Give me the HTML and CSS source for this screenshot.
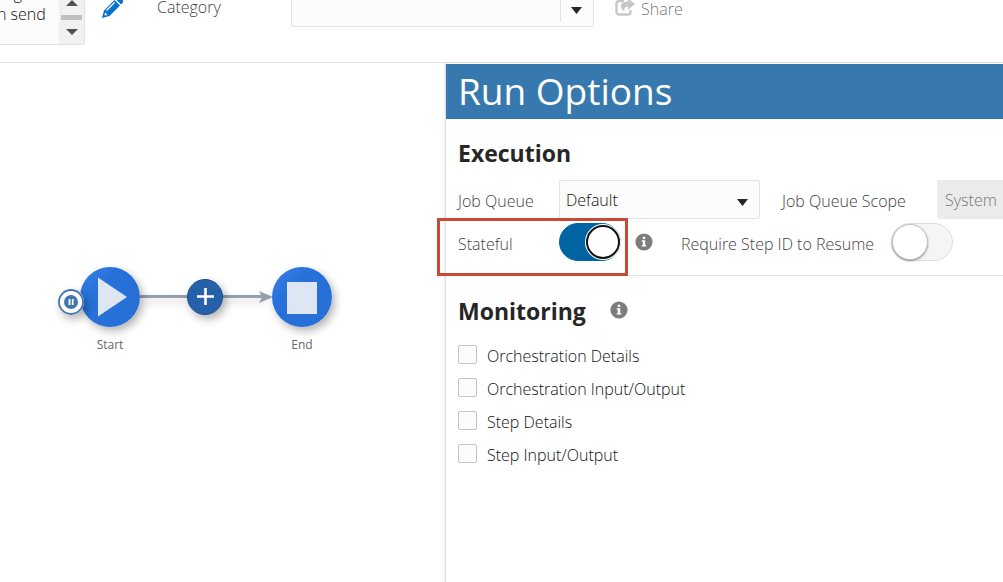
FILE: index.html
```html
<!DOCTYPE html>
<html lang="en">
<head>
    <meta charset="UTF-8">
    <meta name="viewport" content="width=device-width, initial-scale=1.0">
    <title>Run Options</title>
    <link rel="stylesheet" href="styles.css">
</head>
<body>

<header class="topbar">
    <div class="descp">
        <textarea class="descp-text" aria-label="Description">    g
n send</textarea>
        <div class="scroll">
            <svg width="12" height="6" viewBox="0 0 12 6"><path d="M0 6L6 0L12 6Z" fill="#505050"/></svg>
            <div class="scroll-thumb"></div>
            <svg width="12" height="6" viewBox="0 0 12 6"><path d="M0 0L6 6L12 0Z" fill="#505050"/></svg>
        </div>
    </div>
    <button class="edit-btn" aria-label="Edit">
        <svg width="22" height="22" viewBox="0 0 22 22">
            <path fill="#0572ce" d="M15 1.5Q17 0 19 2L20.5 3.5Q22 5.5 20.5 7L19 8.5L13.5 3Z"/>
            <path fill="#0572ce" d="M12.5 4L18 9.5L7.5 20L0 22L2 14.5Z"/>
            <path stroke="#fff" stroke-width="1.3" fill="none" d="M4.5 14.5L12.5 6.5"/>
            <path fill="#fff" d="M3.2 16.5L5.6 18.9L3 19.6L2.4 19Z"/>
        </svg>
    </button>
    <label class="label category-label" for="category">Category</label>
    <div class="select category">
        <select id="category"><option></option></select>
        <span class="divider"></span>
        <svg class="arrow" width="11" height="7" viewBox="0 0 11 7"><path d="M0 0H11L5.5 7Z" fill="#262626"/></svg>
    </div>
    <button class="share-btn" disabled>
        <svg width="20" height="18" viewBox="0 0 20 18">
            <path d="M9 3H4Q1.5 3 1.5 5.5V14Q1.5 16.5 4 16.5H13Q15.5 16.5 15.5 14V12" fill="none" stroke="#c8c8c8" stroke-width="2.4"/>
            <path d="M13 0L20 6L13 12V8.7Q8.500 8.5 9.5 13.500Q5 10.500 6 7Q7.500 3.300 13 3.400Z" fill="#c8c8c8"/>
        </svg>
        <span>Share</span>
    </button>
</header>

<main class="main">
    <section class="canvas">
        <div class="link"></div>
        <svg class="link-arrow" width="14" height="12" viewBox="0 0 14 12"><path d="M0 0L14 6L0 12L3 6Z" fill="#94a0ac"/></svg>

        <button class="node start" aria-label="Start">
            <svg width="60" height="60" viewBox="0 0 60 60"><path d="M18 10.5L47 30L18 49.5Z" fill="#dfe6f3"/></svg>
        </button>
        <button class="node pause" aria-label="Pause">
            <svg width="26" height="26" viewBox="0 0 26 26">
                <circle cx="13" cy="13" r="12" fill="#fff" stroke="#4277ad" stroke-width="1.8"/>
                <circle cx="13" cy="13" r="7" fill="#4277ad"/>
                <path d="M11.5 10V16M14.7 10V16" stroke="#fff" stroke-width="1.8"/>
            </svg>
        </button>
        <button class="node add" aria-label="Add step">
            <svg width="36" height="36" viewBox="0 0 36 36"><path d="M18.5 9V26M10 17.5H27" stroke="#fff" stroke-width="2.6"/></svg>
        </button>
        <button class="node end" aria-label="End">
            <svg width="60" height="60" viewBox="0 0 60 60"><path d="M15 15H45V47H15Z" fill="#dfe6f3"/></svg>
        </button>
        <span class="node-name start-name">Start</span>
        <span class="node-name end-name">End</span>
    </section>

    <section class="panel">
        <h1>Run Options</h1>

        <div class="group execution">
            <h2>Execution</h2>
            <div class="row">
                <label class="label first" for="queue">Job Queue</label>
                <div class="select queue">
                    <select id="queue"><option>Default</option></select>
                    <svg class="arrow" width="11" height="7" viewBox="0 0 11 7"><path d="M0 0H11L5.5 7Z" fill="#262626"/></svg>
                </div>
                <label class="label scope-label" for="scope">Job Queue Scope</label>
                <input type="text" class="scope" id="scope" value="System" disabled>
            </div>
            <div class="row stateful">
                <label class="label first" for="stateful">Stateful</label>
                <input type="checkbox" class="switch" id="stateful" checked>
                <svg class="info" width="18" height="18" viewBox="0 0 18 18">
                    <circle cx="9" cy="9" r="8.6" fill="#7d7d7d"/>
                    <path d="M7.8 3.8H10.2V6H7.8ZM6.8 7.3H10.2V12H11.2V13.5H6.8V12H7.8V8.8H6.8Z" fill="#fff"/>
                </svg>
                <label class="label resume-label" for="resume">Require Step ID to Resume</label>
                <input type="checkbox" class="switch" id="resume">
                <div class="highlight"></div>
            </div>
        </div>

        <div class="group monitoring">
            <div class="title-row">
                <h2>Monitoring</h2>
                <svg class="info" width="18" height="18" viewBox="0 0 18 18">
                    <circle cx="9" cy="9" r="8.6" fill="#7d7d7d"/>
                    <path d="M7.8 3.8H10.2V6H7.8ZM6.8 7.3H10.2V12H11.2V13.5H6.8V12H7.8V8.8H6.8Z" fill="#fff"/>
                </svg>
            </div>
            <label class="check"><input type="checkbox"><span>Orchestration Details</span></label>
            <label class="check"><input type="checkbox"><span>Orchestration Input/Output</span></label>
            <label class="check"><input type="checkbox"><span>Step Details</span></label>
            <label class="check"><input type="checkbox"><span>Step Input/Output</span></label>
        </div>
    </section>
</main>

</body>
</html>
```
FILE: styles.css
```css
*, *::before{
    margin: 0;
    padding: 0;
    box-sizing: border-box;
}

body{
    display: flex;
    flex-direction: column;
    min-height: 100vh;
    overflow: hidden;
    background-color: white;
    color: #111;
    font-family: "Open Sans", "Noto Sans", sans-serif;
    font-size: 16px;
    font-weight: 300;
}

input, select, textarea, button{
    font: inherit;
    color: inherit;
}

button{
    border: none;
    background: none;
    cursor: pointer;
}

svg{
    display: block;
    flex: none;
}

.label{
    color: #444;
    white-space: nowrap;
}

/* top bar, scrolled partly out of view */
.topbar{
    display: flex;
    align-items: center;
    margin-top: -31px;
    padding-bottom: 17px;
    border-bottom: 1px solid #e4e4e4;
}

.descp{
    display: flex;
    width: 85px;
    height: 76px;
    border: 1px solid #dfe4e7;
    border-left: none;
    border-radius: 0 2px 2px 0;
    background-color: #fcfcfc;
}

.descp-text{
    width: 59px;
    margin-left: -3px;
    padding-top: 13px;
    border: none;
    outline: none;
    background: none;
    resize: none;
    overflow: hidden;
    white-space: pre;
    line-height: 21px;
}

.scroll{
    display: flex;
    flex: 1;
    flex-direction: column;
    align-items: center;
    justify-content: flex-end;
    gap: 9px;
    margin-left: 3px;
    padding-bottom: 9px;
    background-color: #f1f1f1;
}

.scroll-thumb{
    width: 21px;
    height: 5px;
    background-color: #c1c1c1;
}

.edit-btn{
    margin-left: 17px;
}

.category-label{
    margin-left: 33px;
    width: 134px;
}

.select{
    position: relative;
    height: 39px;
}

.select select{
    appearance: none;
    width: 100%;
    height: 100%;
    padding: 0 6px;
    border: 1px solid #dfe4e7;
    border-radius: 2px;
    background-color: #fcfcfc;
    outline: none;
}

.select .arrow{
    position: absolute;
    right: 12px;
    top: 19px;
}

.category{
    width: 303px;
}

.divider{
    position: absolute;
    right: 33px;
    top: 5px;
    bottom: 5px;
    border-left: 1px solid #dfe4e7;
}

.share-btn{
    display: flex;
    align-items: center;
    gap: 6px;
    margin-left: 21px;
    color: #777;
}

.share-btn span{
    padding-top: 4px;
}

.main{
    display: grid;
    grid-template-columns: 445px minmax(0, 1fr);
    flex: 1;
}

/* orchestration diagram */
.canvas{
    position: relative;
}

.node{
    position: absolute;
    border-radius: 50%;
    box-shadow: 3px 4px 8px rgba(0, 0, 0, 0.3);
}

.start, .end{
    top: 204px;
    width: 60px;
    height: 60px;
    background: linear-gradient(135deg, #3a82e8, #2670d8 35%);
}

.start{
    left: 80px;
}

.end{
    left: 272px;
}

.pause{
    left: 58px;
    top: 226px;
    width: 26px;
    height: 26px;
    background-color: white;
}

.add{
    left: 187px;
    top: 216px;
    width: 36px;
    height: 36px;
    border: 1px solid #1b508f;
    background-color: #2660a8;
}

.add svg{
    margin: -1px;
}

.link{
    position: absolute;
    left: 140px;
    top: 232px;
    width: 124px;
    height: 3px;
    background-color: #94a0ac;
    box-shadow: 3px 4px 8px rgba(0, 0, 0, 0.2);
}

.link-arrow{
    position: absolute;
    left: 259px;
    top: 228px;
}

.node-name{
    position: absolute;
    top: 273px;
    width: 60px;
    text-align: center;
    font-size: 12px;
    font-weight: 400;
    color: #666;
}

.start-name{
    left: 80px;
}

.end-name{
    left: 272px;
}

/* run options */
.panel{
    padding-top: 1px;
    border-left: 1px solid #e0e0e0;
    box-shadow: -1px 0 2px rgba(0, 0, 0, 0.08);
}

h1{
    padding-left: 12px;
    padding-bottom: 2px;
    background-color: #3779ae;
    color: white;
    font-size: 37px;
    font-weight: 400;
    line-height: 53px;
}

h2{
    color: #262626;
    font-size: 23px;
    font-weight: 700;
    line-height: 32px;
}

.group{
    padding-left: 12px;
}

.execution{
    padding-top: 18px;
    padding-bottom: 14px;
    border-bottom: 1px solid #e4e4e4;
}

.row{
    display: flex;
    align-items: center;
    height: 39px;
    margin-top: 11px;
}

.row .label{
    padding-top: 2px;
}

.first{
    flex: none;
    width: 101px;
}

.queue{
    flex: none;
    width: 201px;
}

.scope-label{
    flex: none;
    width: 155px;
    margin-left: 22px;
}

.scope{
    flex: 1;
    min-width: 66px;
    height: 39px;
    padding-left: 8px;
    border: none;
    border-radius: 2px 0 0 2px;
    background-color: #ebebeb;
    color: #777;
}

.stateful{
    position: relative;
    height: 38px;
    margin-top: 4px;
}

.stateful .label{
    padding-top: 4px;
}

.switch{
    appearance: none;
    display: flex;
    align-items: center;
    flex: none;
    width: 62px;
    height: 38px;
    border: 1px solid #dfdfdf;
    border-radius: 19px;
    background-color: #f5f5f5;
}

.switch::before{
    content: "";
    width: 36px;
    height: 36px;
    border: 1px solid #c4c4c4;
    border-radius: 50%;
    background-color: white;
    box-shadow: 0 1px 2px rgba(0, 0, 0, 0.4);
}

.switch:checked{
    justify-content: flex-end;
    border-color: #0064a2;
    background-color: #0064a2;
}

.switch:checked::before{
    border: 2px solid #111;
    box-shadow: 0 0 0 1px white;
    width: 34px;
    height: 34px;
}

.stateful .info{
    margin-left: 14px;
}

.resume-label{
    flex: none;
    width: 210px;
    margin-left: 28px;
}

.highlight{
    position: absolute;
    left: -21px;
    top: -5px;
    width: 191px;
    height: 58px;
    border: 3px solid #c84a35;
    pointer-events: none;
}

.monitoring{
    padding-top: 19px;
}

.title-row{
    display: flex;
    align-items: flex-start;
    gap: 24px;
    margin-bottom: 11px;
}

.title-row .info{
    margin-top: 6px;
}

.check{
    display: flex;
    align-items: center;
    gap: 10px;
    height: 33px;
}

.check span{
    padding-top: 2px;
}

.check input{
    appearance: none;
    width: 19px;
    height: 19px;
    border: 1px solid #c4c4c4;
    border-radius: 2px;
    background-color: #fcfcfc;
}
```
